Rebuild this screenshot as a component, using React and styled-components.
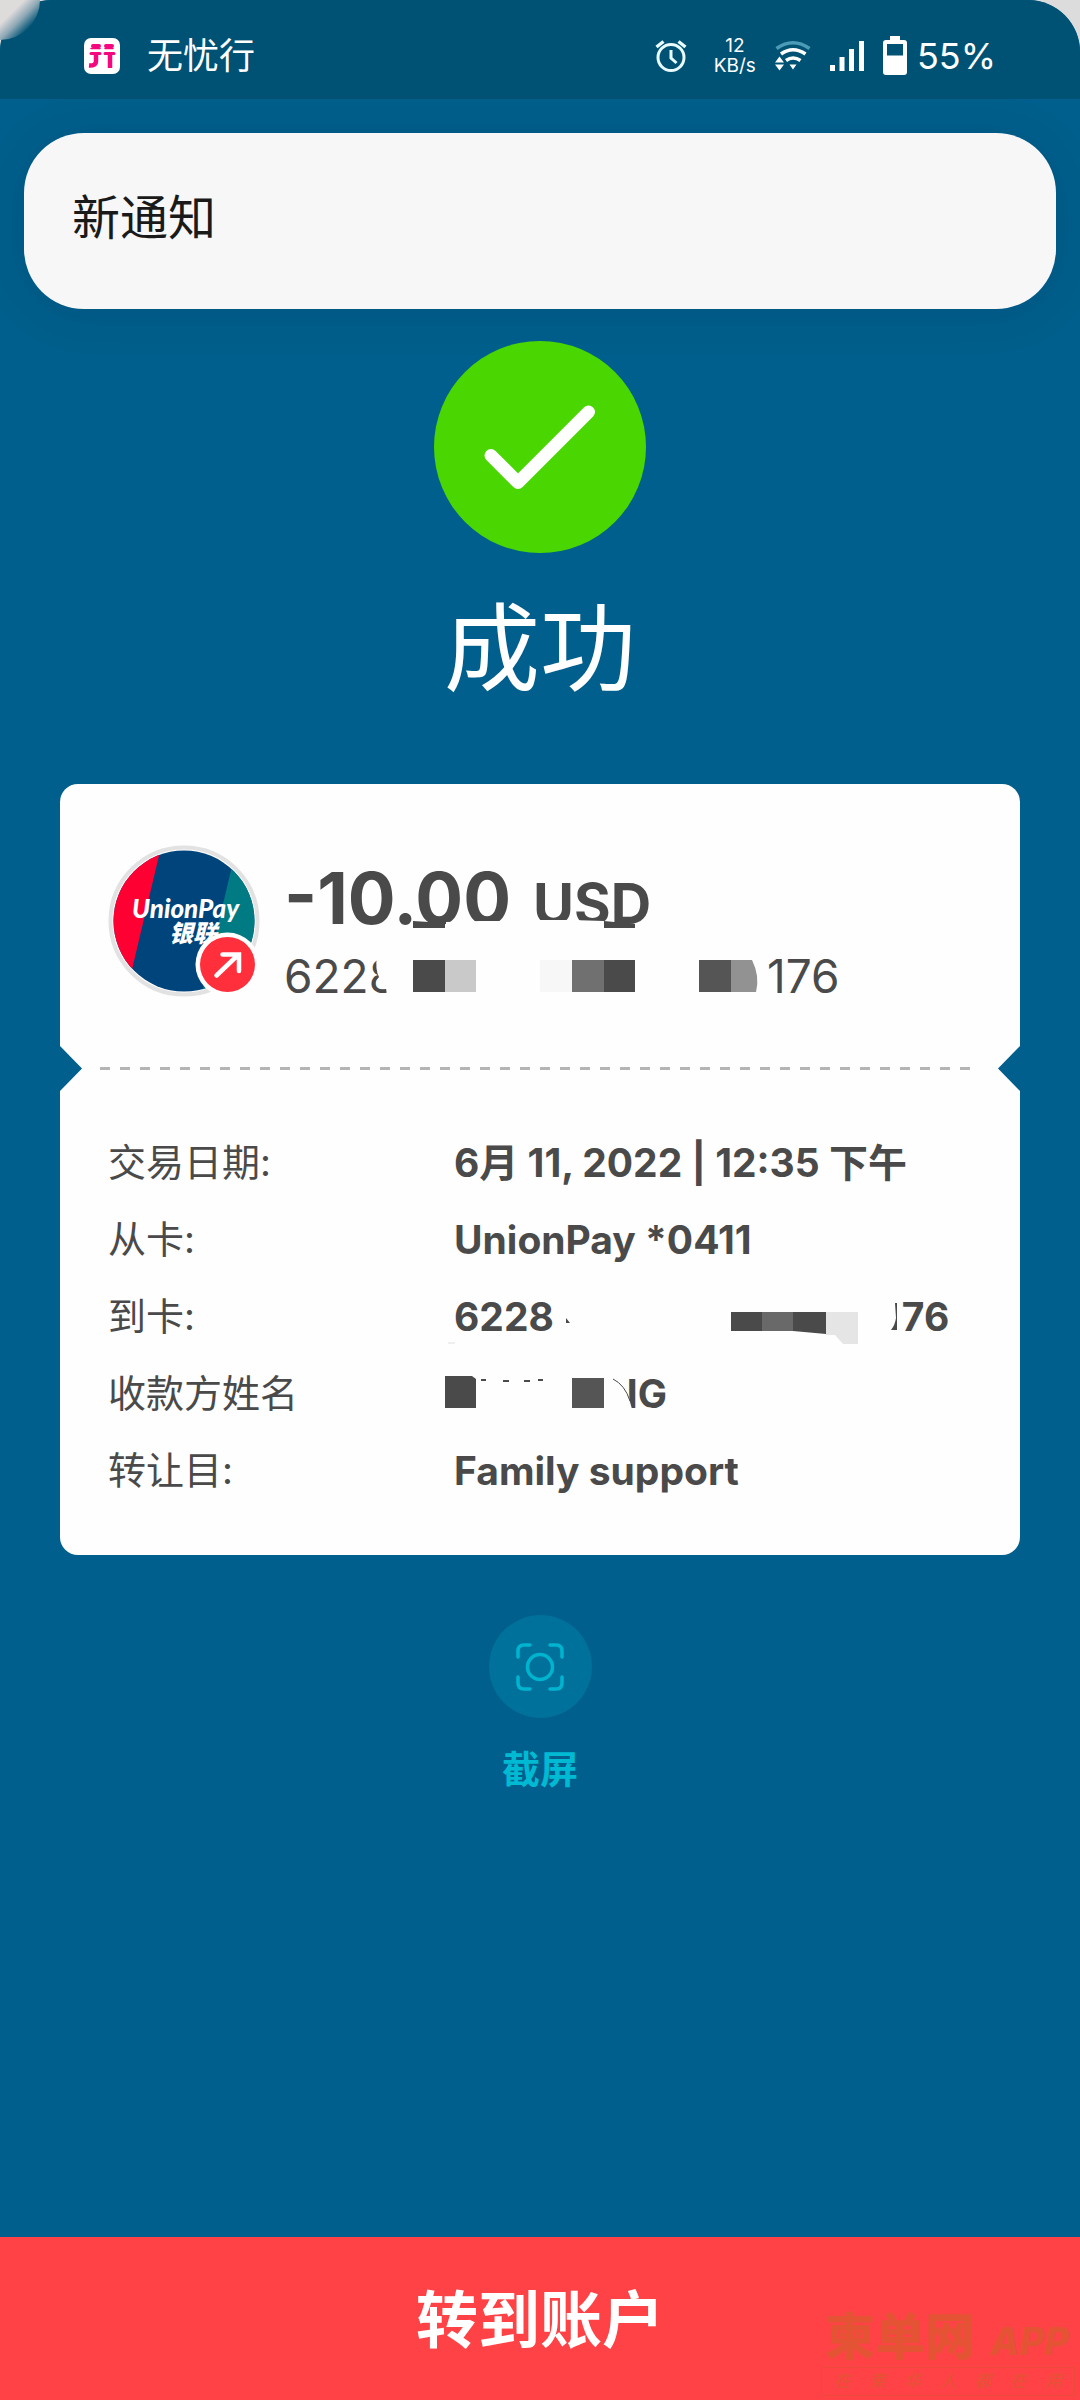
import React from "react";
import styled, { createGlobalStyle } from "styled-components";

const GlobalStyle = createGlobalStyle`
  *, *::before, *::after { box-sizing: border-box; }
  body {
    margin: 0;
    background: #dcdcdc;
    font-family: Inter, "Noto Sans CJK SC", sans-serif;
    color: #4a4a4a;
  }
  button { font: inherit; border: 0; padding: 0; background: none; cursor: pointer; }
`;

const Screen = styled.div`
  position: relative;
  display: flex;
  flex-direction: column;
  min-height: 100vh;
  background: #005f8c;
  border-radius: 52px 52px 0 0;
`;

const CornerGlow = styled.div`
  position: absolute;
  top: 0;
  left: 0;
  width: 40px;
  height: 40px;
  border-bottom-right-radius: 40px;
  background: linear-gradient(135deg, #dedbdb 30%, #8fa9b6 50%, #005274 72%);
`;

const StatusBar = styled.header`
  display: flex;
  align-items: center;
  justify-content: space-between;
  height: 99px;
  padding: 12px 84px 0 84px;
  background: #005274;
  border-radius: 52px 52px 0 0;
  color: #fff;
`;

const StatusGroup = styled.div`
  display: flex;
  align-items: center;
  gap: ${(p) => p.$gap}px;
`;

const StatusText = styled.span`
  font-size: 36px;
  line-height: 40px;
`;

const NetSpeed = styled.span`
  display: flex;
  flex-direction: column;
  align-items: center;
  margin-left: 8px;
  font-size: 19px;
  line-height: 20px;
`;

const Notice = styled.section`
  margin: 34px 24px 0;
  padding: 48px;
  height: 176px;
  border-radius: 60px;
  background: #f7f7f7;
  box-shadow: 0 4px 48px rgba(0, 20, 40, 0.12);
  color: #1a1a1a;
  font-size: 48px;
  line-height: 74px;
`;

const Main = styled.main`
  display: flex;
  flex-direction: column;
  align-items: center;
  flex: 1;
  padding: 32px 60px 60px;
`;

const Title = styled.h1`
  margin: 24px 0 64px;
  color: #fff;
  font-size: 96px;
  font-weight: 400;
  line-height: 143px;
`;

const Ticket = styled.section`
  align-self: stretch;
  background: #fefefe;
  border-radius: 18px;
`;

const Summary = styled.div`
  display: flex;
  align-items: center;
  gap: 24px;
  height: 262px;
  padding: 12px 48px 0;
`;

const SummaryText = styled.div`
  position: relative;
  display: flex;
  flex-direction: column;
  height: 150px;
`;

const Amount = styled.div`
  display: flex;
  align-items: baseline;
  gap: 22px;
  padding-top: 12px;
  font-size: 71px;
  font-weight: 700;
  line-height: 80px;
`;

const Currency = styled.span`
  font-size: 56px;
`;

const CardNumber = styled.div`
  display: flex;
  gap: 370px;
  font-size: 46px;
  line-height: 64px;
`;

const Overlay = styled.svg`
  position: absolute;
  left: 0;
  top: 0;
  overflow: visible;
  pointer-events: none;
`;

const Perforation = styled.div`
  display: flex;
  align-items: center;
  justify-content: space-between;
  height: 45px;
`;

const Notch = styled.i`
  width: 22px;
  height: 45px;
  background: #005f8c;
  clip-path: ${(p) => (p.$right ? "polygon(100% 0, 0 50%, 100% 100%)" : "polygon(0 0, 100% 50%, 0 100%)")};
`;

const Dashes = styled.i`
  flex: 1;
  height: 3px;
  margin: 0 26px 0 18px;
  background: repeating-linear-gradient(90deg, #b4b4b4 0 10px, transparent 10px 20px);
`;

const Details = styled.dl`
  margin: 0;
  padding: 33px 48px 46px;
`;

const Row = styled.div`
  display: flex;
  font-size: 38px;
  line-height: 77px;
`;

const Label = styled.dt`
  flex: 0 0 346px;
`;

const Value = styled.dd`
  position: relative;
  display: flex;
  gap: ${(p) => p.$gap || 0}px;
  padding-left: ${(p) => p.$indent || 0}px;
  margin: 0;
  font-size: 39px;
  font-weight: 700;
  white-space: nowrap;
`;

const CaptureButton = styled.button`
  display: flex;
  flex-direction: column;
  align-items: center;
  gap: 23px;
  margin-top: 60px;
  color: #00bad3;
  font-size: 38px;
  font-weight: 700;
  line-height: 56px;
`;

const CaptureDisc = styled.span`
  display: grid;
  place-items: center;
  width: 103px;
  height: 103px;
  border-radius: 50%;
  background: #00719a;
`;

const Footer = styled.footer`
  position: relative;
`;

const AccountButton = styled.button`
  display: block;
  width: 100%;
  height: 163px;
  padding-top: 4px;
  background: #ff4246;
  color: #fff;
  font-size: 62px;
  font-weight: 600;
  line-height: 90px;
`;

const Watermark = styled.div`
  position: absolute;
  right: 5px;
  bottom: 4px;
  width: 254px;
  color: #e45434;
  pointer-events: none;
`;

const MarkTitle = styled.div`
  display: flex;
  align-items: baseline;
  justify-content: space-between;
  padding: 0 6px 0 4px;
  font-size: 50px;
  font-weight: 900;
  line-height: 52px;
`;

const MarkLatin = styled.span`
  font-size: 38px;
  font-weight: 800;
  font-style: italic;
`;

const MarkLine = styled.div`
  display: flex;
  justify-content: space-between;
  padding: 0 12px;
  border: 1px solid #ec4b3c;
  font-size: 17px;
  font-style: italic;
  line-height: 27px;
`;

const AppIcon = () => (
  <svg width="36" height="36" viewBox="0 0 36 36" aria-hidden="true">
    <rect width="36" height="36" rx="7" fill="#fff" />
    <g fill="none" stroke="#f5077f" strokeLinecap="round">
      <path d="M9 8h6M22 8h6" strokeWidth="4" />
      <path d="M7 10.500h9M21 10.500h8" strokeWidth="1.500" />
      <path d="M7 15.500h9M21 15.500h9" strokeWidth="3" />
      <path d="M12 16v7q0 5-7 4.500M26 16v14" strokeWidth="4.500" strokeLinecap="butt" />
    </g>
  </svg>
);

const AlarmIcon = () => (
  <svg width="32" height="34" viewBox="0 0 32 34" fill="none" stroke="#e8fbff" strokeWidth="3" aria-hidden="true">
    <circle cx="16" cy="18.500" r="13" />
    <path d="M1.500 8l7-5.500M30.500 8l-7-5.500" strokeWidth="3.400" />
    <path d="M16 11v8l5.500 5" />
  </svg>
);

const WifiIcon = () => (
  <svg width="36" height="32" viewBox="0 0 36 32" aria-hidden="true">
    <g fill="none" strokeWidth="3.600">
      <path d="M1.500 8.500Q18-3 34.500 8.500" stroke="#4b9bb8" />
      <path d="M6 14q12-8.500 24.500 0" stroke="#fff" />
      <path d="M11 20.500q7-5 14.500 0" stroke="#fff" />
    </g>
    <path d="M14.500 24.500h7L18 29.500zM0 22.500h9l-4.500-6zM0 24.500h9L4.500 30.500z" fill="#fff" />
  </svg>
);

const SignalIcon = () => (
  <svg width="34" height="32" viewBox="0 0 34 32" fill="#fff" aria-hidden="true">
    <path d="M0 25h5v6H0zM9.500 17h5v14h-5zM19 9h5v22h-5zM29 1h5v30h-5z" />
  </svg>
);

const BatteryIcon = () => (
  <svg width="24" height="40" viewBox="0 0 24 40" aria-hidden="true">
    <path fill="#fff" fillRule="evenodd" d="M7 0h10v4h4q3 0 3 3v29q0 3-3 3H3q-3 0-3-3V7q0-3 3-3h4zM4 8v11.500h16V8z" />
  </svg>
);

const CheckMark = () => (
  <svg width="212" height="212" viewBox="0 0 212 212" role="img" aria-label="成功">
    <circle cx="106" cy="106" r="106" fill="#4ad600" />
    <path d="M57 114.500L84 141.500L154.500 71" fill="none" stroke="#fff" strokeWidth="13" strokeLinecap="round" strokeLinejoin="round" />
  </svg>
);

const BankLogo = () => (
  <svg width="152" height="152" viewBox="0 0 152 152" role="img" aria-label="UnionPay 银联">
    <defs>
      <clipPath id="disc">
        <circle cx="76" cy="76" r="70.500" />
      </clipPath>
    </defs>
    <circle cx="76" cy="76" r="73.500" fill="#fff" stroke="#e2e2e2" strokeWidth="4" />
    <g clipPath="url(#disc)">
      <path d="M0 0h152v152H0z" fill="#00447c" />
      <path d="M0 0h53.500L17.500 152H0z" fill="#ff0033" />
      <path d="M129 0h23v152H93z" fill="#007b84" />
    </g>
    <g fill="#fff" fontStyle="italic">
      <text x="24" y="73" fontFamily="Lato, sans-serif" fontWeight="900" fontSize="26">UnionPay</text>
      <text x="61" y="97" fontFamily="'Noto Sans CJK SC', sans-serif" fontWeight="900" fontSize="24">银联</text>
    </g>
    <circle cx="119.500" cy="119.500" r="32" fill="#fefefe" />
    <circle cx="119.500" cy="119.500" r="27.500" fill="#ff2f3c" />
    <path d="M108.500 130.500L130 110M114.500 109.500h16.500v16.500" fill="none" stroke="#fff" strokeWidth="4.500" strokeLinecap="round" />
  </svg>
);

const CaptureIcon = () => (
  <svg width="48" height="48" viewBox="0 0 48 48" fill="none" stroke="#00b4cf" strokeWidth="3.500" strokeLinecap="round" aria-hidden="true">
    <circle cx="24" cy="24" r="12.500" />
    <path d="M2 14V8q0-6 6-6h6M34 2h6q6 0 6 6v6M46 34v6q0 6-6 6h-6M14 46H8q-6 0-6-6v-6" />
  </svg>
);

const SummaryMask = () => (
  <Overlay width="560" height="150" aria-hidden="true">
    <path d="M162 76l34-1h30v6h-64zM248 74h40l32 1v8h-72z" fill="#fefefe" />
    <path d="M129 75l32 2v5h-32zM320 75l31 3v4h-31z" fill="#4a4a4a" />
    <path d="M93 110h22v40h-12l-1-8h-7q-5-6 0-11q-4-7-2-21z" fill="#fefefe" />
    <path d="M129 114h32v32h-32z" fill="#4a4a4a" />
    <path d="M161 114h31v32h-31z" fill="#c9c9c9" />
    <path d="M256 114h32v32h-32z" fill="#f7f7f7" />
    <path d="M288 114h32v32h-32z" fill="#707070" />
    <path d="M320 114h31v32h-31z" fill="#4a4a4a" />
    <path d="M415 114h32v32h-32z" fill="#555" />
    <path d="M447 114h21q8 16 4 32h-25z" fill="#929292" />
  </Overlay>
);

const NumberMask = () => (
  <Overlay width="500" height="77" aria-hidden="true">
    <path d="M112 40l4 5h-4z" fill="#4a4a4a" />
    <path d="M277 34h31v19h-31zM339 34h33v22l-33-3z" fill="#4a4a4a" />
    <path d="M308 34h31v19h-31z" fill="#696969" />
    <path d="M372 34h32v32h-15l-8-9h-9z" fill="#e5e5e5" />
    <path d="M441 25h2v27h-6q4-5 5-12z" fill="#4a4a4a" />
    <path d="M-6 65h7" stroke="#e0e0e0" />
  </Overlay>
);

const NameMask = () => (
  <Overlay width="220" height="77" aria-hidden="true">
    <path d="M154 20h4q12 7 16 20l4 14h-24z" fill="#fefefe" />
    <path d="M159 24q12 6 17 22" fill="none" stroke="#4a4a4a" />
    <path d="M-9 21H18l4 3v29h-31z" fill="#4a4a4a" />
    <path d="M118 23h32v30h-32z" fill="#555" />
    <path d="M27 25h5M49 26h6M70 26h6M84 25h5" stroke="#4a4a4a" strokeWidth="2" />
  </Overlay>
);

export default function App() {
  return (
    <>
      <GlobalStyle />
      <Screen>
        <StatusBar>
          <StatusGroup $gap={27}>
            <AppIcon />
            <StatusText>无忧行</StatusText>
          </StatusGroup>
          <StatusGroup $gap={19}>
            <AlarmIcon />
            <NetSpeed>
              <span>12</span>
              <span>KB/s</span>
            </NetSpeed>
            <WifiIcon />
            <SignalIcon />
            <StatusGroup $gap={10}>
              <BatteryIcon />
              <StatusText>55%</StatusText>
            </StatusGroup>
          </StatusGroup>
        </StatusBar>
        <CornerGlow />
        <Notice role="status">新通知</Notice>
        <Main>
          <CheckMark />
          <Title>成功</Title>
          <Ticket>
            <Summary>
              <BankLogo />
              <SummaryText>
                <Amount>
                  <span>-10.00</span>
                  <Currency>USD</Currency>
                </Amount>
                <CardNumber>
                  <span>6228</span>
                  <span>176</span>
                </CardNumber>
                <SummaryMask />
              </SummaryText>
            </Summary>
            <Perforation>
              <Notch />
              <Dashes />
              <Notch $right />
            </Perforation>
            <Details>
              <Row>
                <Label>交易日期:</Label>
                <Value>6月 11, 2022 | 12:35 下午</Value>
              </Row>
              <Row>
                <Label>从卡:</Label>
                <Value>UnionPay *0411</Value>
              </Row>
              <Row>
                <Label>到卡:</Label>
                <Value $gap={348}>
                  <span>6228</span>
                  <span>76</span>
                  <NumberMask />
                </Value>
              </Row>
              <Row>
                <Label>收款方姓名</Label>
                <Value $indent={154}>
                  NG
                  <NameMask />
                </Value>
              </Row>
              <Row>
                <Label>转让目:</Label>
                <Value>Family support</Value>
              </Row>
            </Details>
          </Ticket>
          <CaptureButton type="button">
            <CaptureDisc>
              <CaptureIcon />
            </CaptureDisc>
            截屏
          </CaptureButton>
        </Main>
        <Footer>
          <AccountButton type="button">转到账户</AccountButton>
          <Watermark>
            <MarkTitle>
              <span>柬单网</span>
              <MarkLatin>APP</MarkLatin>
            </MarkTitle>
            <MarkLine>
              {[..."在柬华人都在用"].map((char, index) => (
                <span key={index}>{char}</span>
              ))}
            </MarkLine>
          </Watermark>
        </Footer>
      </Screen>
    </>
  );
}
